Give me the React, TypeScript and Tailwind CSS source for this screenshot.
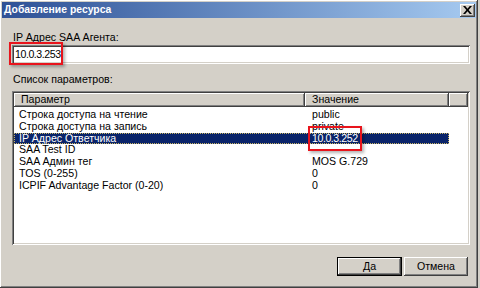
import React from "react";

const rows = [
  { name: "Строка доступа на чтение", value: "public" },
  { name: "Строка доступа на запись", value: "private" },
  { name: "IP Адрес Ответчика", value: "10.0.3.252", selected: true },
  { name: "SAA Test ID", value: "" },
  { name: "SAA Админ тег", value: "MOS G.729" },
  { name: "TOS (0-255)", value: "0" },
  { name: "ICPIF Advantage Factor (0-20)", value: "0" },
];

const raised =
  "shadow-[inset_-1px_-1px_#404040,inset_1px_1px_#ffffff,inset_-2px_-2px_#808080,inset_2px_2px_#d4d0c8]";
const sunken =
  "shadow-[inset_1px_1px_#808080,inset_-1px_-1px_#ffffff,inset_2px_2px_#404040,inset_-2px_-2px_#d4d0c8]";

const HeaderCell = ({ label, w }: { label?: string; w: string }) => (
  <div
    className={`${w} h-full flex items-center pl-[7px] bg-[#d4d0c8] shadow-[inset_-1px_-1px_#404040,inset_1px_1px_#ffffff,inset_-2px_-2px_#808080]`}
  >
    {label}
  </div>
);

export default function App() {
  return (
    <div className="w-[480px] h-[288px] bg-[#d4d0c8] overflow-hidden text-[10.6px] text-black font-['Liberation_Sans',Arial,sans-serif]">
      <div className={`relative w-[478px] h-[288px] p-[2px] flex flex-col ${raised}`}>
        {/* title bar */}
        <div className="h-[16px] flex items-center justify-between pl-[2px] pr-[1px] bg-gradient-to-r from-[#2f5196] to-[#a6caf0]">
          <span className="text-white font-bold text-[10.4px] leading-none">Добавление ресурса</span>
          <div className={`w-[15px] h-[13px] bg-[#d4d0c8] flex items-center justify-center ${raised}`}>
            <svg width="9" height="8" viewBox="0 0 9 8">
              <path d="M0 0h2.2l2.3 2.8L6.8 0H9L5.6 4 9 8H6.8L4.5 5.2 2.2 8H0l3.4-4z" fill="#000" />
            </svg>
          </div>
        </div>

        <div className="flex flex-col pl-[10px] pr-[6px]">
          <div className="mt-[14px] h-[11px] leading-[11px] pl-[1px]">IP Адрес SAA Агента:</div>
          <div className={`mt-[2px] h-[19px] bg-white flex items-center pl-[3px] tracking-[-0.45px] ${sunken}`}>
            10.0.3.253
          </div>

          <div className="mt-[10px] h-[11px] leading-[11px] pl-[1px]">Список параметров:</div>
          <div className={`mt-[6px] h-[154px] bg-white p-[2px] ${sunken}`}>
            <div className="h-[14px] flex">
              <HeaderCell label="Параметр" w="w-[291px]" />
              <HeaderCell label="Значение" w="w-[144px]" />
              <HeaderCell w="flex-1" />
            </div>
            <div className="pt-[2px] flex flex-col">
              {rows.map((r) => (
                <div
                  key={r.name}
                  className={`h-[11.8px] w-[435px] flex items-center ${
                    r.selected ? "bg-[#0a246a] text-white outline-1 outline-dotted outline-[#c8b464] -outline-offset-1" : ""
                  }`}
                >
                  <span className="w-[291px] pl-[5px] whitespace-nowrap">{r.name}</span>
                  <span className={`pl-[7px] whitespace-nowrap ${r.selected ? "tracking-[-0.45px]" : ""}`}>
                    {r.value}
                  </span>
                </div>
              ))}
            </div>
          </div>

          <div className="mt-[12px] flex justify-end gap-[2px] pr-[2px]">
            <button className="w-[65px] h-[19px] bg-[#d4d0c8] border border-black shadow-[inset_-1px_-1px_#404040,inset_1px_1px_#ffffff,inset_-2px_-2px_#808080]">
              Да
            </button>
            <button className={`w-[64px] h-[19px] bg-[#d4d0c8] ${raised}`}>Отмена</button>
          </div>
        </div>

        {/* highlight boxes */}
        <div className="absolute left-[9px] top-[42px] w-[54px] h-[23px] border-2 border-[#e8141c] shadow-[2px_2px_3px_rgba(0,0,0,0.3)]" />
        <div className="absolute left-[308px] top-[126px] w-[54px] h-[25px] border-2 border-[#e8141c] shadow-[2px_2px_3px_rgba(0,0,0,0.3)]" />
      </div>
    </div>
  );
}
